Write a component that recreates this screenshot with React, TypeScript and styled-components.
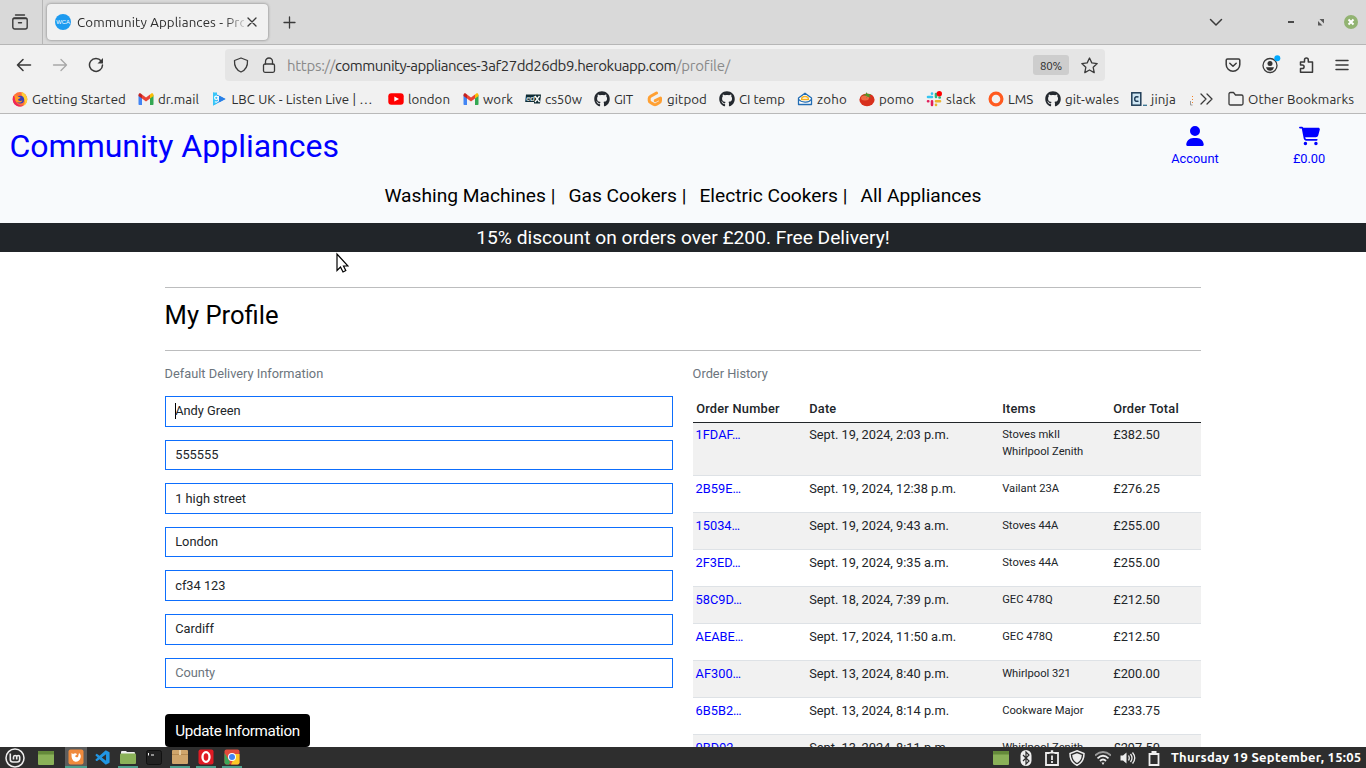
import React, { useLayoutEffect, useRef, useState } from "react";
import styled, { createGlobalStyle } from "styled-components";
import { FaUser, FaCartShopping, FaGithub } from "react-icons/fa6";
import { BiLogoVisualStudio } from "react-icons/bi";

const Global = createGlobalStyle`
  * { box-sizing: border-box; }
  body { margin: 0; overflow: hidden; }
  svg { display: block; flex: none; }
`;

/* Text that spreads its letters to fill a given width. */
const FitSpan = styled.span`
  display: inline-block;
  white-space: pre;
  flex: none;
`;
function Fit({ w, children }: { w: number; children: string }) {
  const ref = useRef<HTMLSpanElement>(null);
  const [spacing, setSpacing] = useState<number | null>(null);
  useLayoutEffect(() => {
    const natural = ref.current!.getBoundingClientRect().width;
    setSpacing((w - natural) / children.length);
  }, [w, children]);
  return (
    <FitSpan ref={ref} style={spacing === null ? undefined : { letterSpacing: spacing, width: w }}>
      {children}
    </FitSpan>
  );
}

const Screen = styled.div`
  width: 1366px;
  height: 768px;
  display: flex;
  flex-direction: column;
  overflow: hidden;
  background: #fff;
`;

/* ---------- browser chrome ---------- */
const Chrome = styled.div`
  flex: none;
  font-family: Ubuntu, "Noto Sans", sans-serif;
  font-size: 13.3px;
  color: #2e2e2e;
  background: #f1f1f1;
`;
const TabStrip = styled.div`
  height: 45px;
  display: flex;
  align-items: center;
  background: #d9d9d9;
  border-bottom: 1px solid #b6b6b6;
`;
const ViewCell = styled.div`
  width: 43px;
  height: 44px;
  padding-left: 12px;
  display: flex;
  align-items: center;
  border-right: 1px solid #b6b6b6;
`;
const Tab = styled.div`
  width: 221px;
  height: 36px;
  margin-left: 4px;
  padding: 0 11px 0 8px;
  display: flex;
  align-items: center;
  background: #f1f1f1;
  border-radius: 4px;
  box-shadow: 0 0 3px rgba(0, 0, 0, 0.45);
`;
const TabTitle = styled.div`
  width: 168px;
  margin: 0 3px 0 6px;
  overflow: hidden;
  white-space: nowrap;
  mask-image: linear-gradient(to right, #000 148px, transparent 172px);
`;
const NewTab = styled.div`
  margin-left: 15px;
`;
const WindowControls = styled.div`
  margin-left: auto;
  display: flex;
  align-items: center;
  padding-right: 8px;
`;
const Toolbar = styled.div`
  height: 40px;
  display: flex;
  align-items: center;
  padding: 0 16px 0 16px;
`;
const NavButtons = styled.div`
  width: 209px;
  display: flex;
  gap: 20px;
`;
const UrlBar = styled.div`
  width: 880px;
  height: 32px;
  padding: 0 7px 0 8px;
  display: flex;
  align-items: center;
  background: #e5e5e5;
  border-radius: 4px;
`;
const Url = styled.div`
  margin-left: 10px;
  font-size: 15px;
  color: #8a8a8a;
  white-space: nowrap;
  b { font-weight: 400; color: #2e2e2e; }
`;
const ZoomBadge = styled.div`
  width: 36px;
  height: 20px;
  margin: 0 12px 0 auto;
  display: flex;
  justify-content: center;
  align-items: center;
  font-size: 11.5px;
  background: #cdcdcd;
  border-radius: 3px;
`;
const ToolIcons = styled.div`
  margin-left: auto;
  display: flex;
  gap: 20px;
`;
const Bookmarks = styled.div`
  height: 29px;
  display: flex;
  align-items: center;
  padding-left: 12px;
  border-bottom: 1px solid #b9b9b9;
`;
const Bookmark = styled.div<{ $w: number }>`
  width: ${(p) => p.$w}px;
  flex: none;
  display: flex;
  align-items: center;
  gap: 4px;
`;

/* ---------- site ---------- */
const Site = styled.main`
  flex: 1;
  min-height: 0;
  overflow: hidden;
  font-family: Roboto, sans-serif;
  font-size: 12.8px;
  color: #212529;
`;
const SiteHeader = styled.header`
  height: 109px;
  background: #f8fafc;
`;
const HeaderTop = styled.div`
  height: 64px;
  display: flex;
  padding-left: 9.5px;
  color: #00f;
`;
const Brand = styled.div`
  font-size: 32px;
  line-height: 65px;
`;
const HeaderLink = styled.div<{ $w: number }>`
  width: ${(p) => p.$w}px;
  padding-top: 12px;
  display: flex;
  flex-direction: column;
  align-items: center;
  line-height: 19px;
  gap: 3px;
  > svg { height: 20px; }
`;
const Spacer = styled.div`
  flex: 1;
`;
const SiteNav = styled.nav`
  padding: 4px 0 0 384.4px;
  display: flex;
  gap: 13px;
  font-size: 19.2px;
  line-height: 28px;
  color: #000;
`;
const Banner = styled.div`
  height: 29px;
  text-align: center;
  font-size: 19.2px;
  line-height: 29px;
  color: #fff;
  background: #212529;
`;
const Container = styled.div`
  width: 1036px;
  margin: 35px auto 0;
  border-top: 1px solid #bcbdbe;
`;
const Heading = styled.h2`
  margin: 0;
  height: 63px;
  font-size: 25.6px;
  font-weight: 400;
  line-height: 55px;
  color: #000;
  border-bottom: 1px solid #bcbdbe;
  text-indent: -0.4px;
`;
const Columns = styled.div`
  display: grid;
  grid-template-columns: 508px 508px;
  gap: 20px;
`;
const Caption = styled.p`
  margin: 13px 0 0;
  height: 32px;
  line-height: 20px;
  color: #6c757d;
  text-indent: -0.4px;
`;
const Form = styled.div`
  display: flex;
  flex-direction: column;
  gap: 13px;
`;
const Field = styled.div<{ $empty?: boolean }>`
  height: 30.6px;
  padding: 0 9.2px 0.8px;
  display: flex;
  align-items: center;
  border: 1px solid #0d6efd;
  color: ${(p) => (p.$empty ? "#6c757d" : "#212529")};
`;
const Caret = styled.i`
  width: 1px;
  height: 16px;
  margin-right: -1px;
  background: #000;
`;
const Button = styled.div`
  width: 145px;
  height: 33px;
  margin-top: 26.2px;
  border-radius: 4px;
  text-align: center;
  font-size: 15.2px;
  line-height: 34px;
  color: #fff;
  background: #000;
`;
const Row = styled.div<{ $h: number; $striped?: boolean }>`
  height: ${(p) => p.$h}px;
  display: grid;
  grid-template-columns: 113px 193px 111px 91px;
  padding-top: 3px;
  line-height: 19px;
  background: ${(p) => (p.$striped ? "#f1f1f1" : "#fff")};
  border-bottom: 1px solid #dee2e6;
  > * { padding-left: 3.2px; white-space: nowrap; }
`;
const HeadRow = styled(Row)`
  font-weight: 500;
  letter-spacing: 0.22px;
  border-bottom-color: #212529;
`;
const FirstRow = styled(Row)`
  padding-top: 2px;
`;
const OrderLink = styled.div`
  color: #00f;
  text-indent: -0.6px;
`;
const Items = styled.div`
  padding-top: 1px;
  font-size: 11.2px;
  line-height: 17px;
`;

/* ---------- desktop panel ---------- */
const Panel = styled.footer`
  height: 21px;
  flex: none;
  display: flex;
  align-items: stretch;
  padding-right: 4.5px;
  background: #2e2e2e;
  color: #fff;
`;
const Launcher = styled.div<{ $w: number; $open?: boolean; $active?: boolean }>`
  width: ${(p) => p.$w}px;
  margin: 0 3px;
  display: flex;
  justify-content: center;
  align-items: center;
  background: ${(p) => (p.$active ? "#5c5c5c" : "transparent")};
  border-bottom: ${(p) => (p.$open ? "2px solid #4c9f8c" : "0")};
`;
const Tray = styled.div`
  margin-left: auto;
  display: flex;
  align-items: center;
  gap: 9.5px;
`;
const Clock = styled.div`
  font: 700 13px/21px Ubuntu, "Noto Sans", sans-serif;
`;
const Pointer = styled.svg`
  position: absolute;
  left: 335px;
  top: 252px;
`;

const line = { fill: "none", stroke: "#3a3a3a", strokeWidth: 1.3, strokeLinecap: "round", strokeLinejoin: "round" } as const;
const Svg = ({ s = 16, h, children }: { s?: number; h?: number; children: React.ReactNode }) => (
  <svg width={s} height={h ?? s} viewBox={`0 0 ${s} ${h ?? s}`}>{children}</svg>
);

const Gmail = () => (
  <Svg>
    <path d="M.5 4v9.200q0 .8.8.8H4V7z" fill="#4285f4" />
    <path d="M15.500 4v9.200q0 .8-.8.8H12V7z" fill="#34a853" />
    <path d="M12 3.500v4L15.500 5V4c0-2-1.800-2-2.500-1.300z" fill="#fbbc04" />
    <path d="M.5 5V4c0-2 1.800-2 2.500-1.300l1 .8v4z" fill="#c5221f" />
    <path d="M4 3.500l4 3 4-3v4l-4 3-4-3z" fill="#ea4335" />
  </Svg>
);
const Firefox = () => (
  <Svg>
    <circle cx="8" cy="8.300" r="7.300" fill="#ff7139" />
    <path d="M10 1c2 1 5.300 3.500 5.300 7.500 0 3-2 5.500-4 6.300 2-3 2-5 0-8C10 5 9 3 10 1z" fill="#ffcf35" />
    <path d="M1.500 4.500C0 8 .5 13 5 15c3 1 5 .5 6.500-.5-5 .5-9-3-8-8z" fill="#f0285a" />
    <circle cx="8.200" cy="8.600" r="3.900" fill="#3a3fb5" />
    <path d="M2.500 4.500c1.500 0 3 .3 4 1.300l2 .7c0 1.200-2 1-2.500 2.200.8 1.500 3 1.500 4.500.5-.5 3-6.500 3.500-7.500-.5z" fill="#ff9a25" />
  </Svg>
);
const Player = () => (
  <Svg>
    <path d="M1 1.500L13.500 8 1 14.500z" fill="#148cf0" />
    <path d="M1 1.500h4v11L1 14.500z" fill="#38c6f8" />
    <path d="M7.500 4.800L13.500 8l-6 3.200z" fill="#2b7fe6" />
    <circle cx="4.300" cy="6.800" r="1.700" fill="none" stroke="#fff" strokeWidth="1.200" />
    <path d="M6.300 5v5q-1.200 1.700-3.500.8" fill="none" stroke="#fff" strokeWidth="1.200" />
  </Svg>
);
const Youtube = () => (
  <Svg>
    <rect x=".3" y="2.300" width="15.400" height="11.400" rx="3" fill="#f00" />
    <path d="M6.300 5.500v5L11 8z" fill="#fff" />
  </Svg>
);
const EdxText = styled.text`
  font: italic 700 8px "Liberation Sans", sans-serif;
  fill: #c9d3d6;
`;
const Edx = () => (
  <Svg>
    <path d="M1 3.500h15l-1 9H9v-1.500H.2z" fill="#0e2b33" />
    <EdxText x="1" y="10" textLength="9">ed</EdxText>
    <path d="M10 5l4.500 6M14.500 5L10 11" stroke="#fff" strokeWidth="1.300" />
  </Svg>
);
const Gitpod = () => (
  <Svg>
    <path d="M9.500 2L3.700 5.200q-1.500.8-1.500 2.300v2q0 1.300 1.300 2l3.300 1.900q1.200.6 2.400 0l3.300-1.900q1-.6 1-2V7L8.300 9.700" fill="none" stroke="#ffa033" strokeWidth="3" strokeLinecap="round" strokeLinejoin="round" />
  </Svg>
);
const Zoho = () => (
  <Svg>
    <path d="M1.500 7L8 2.200 14.500 7v6.500h-13z" fill="#fff" stroke="#226db4" strokeWidth="1.300" strokeLinejoin="round" />
    <path d="M2 8.500c2 3 10 4 12 0" fill="none" stroke="#226db4" strokeWidth="1.200" />
    <path d="M4.500 8.500c0-4 7-4 7 0z" fill="#fff" stroke="#f9b21d" strokeWidth="1.300" />
  </Svg>
);
const Tomato = () => (
  <Svg>
    <ellipse cx="8" cy="8.800" rx="7.600" ry="6.400" fill="#d8301c" />
    <ellipse cx="6" cy="7" rx="4" ry="2.500" fill="#f06a44" />
    <path d="M8 5L3.500 4 7 3.300 7 1l1.500 2L12.500 3 10 4.500l2 2.500L8.500 5.500 7 7.500z" fill="#4d9a2b" />
  </Svg>
);
const Slack = () => (
  <Svg>
    <g strokeWidth="2.600" strokeLinecap="round">
      <path d="M6 2.500v.2M2 6h4" stroke="#36c5f0" />
      <path d="M10 3v3M13.500 6.500h.3" stroke="#2eb67d" />
      <path d="M10 10.300h4M10 13.700v.2" stroke="#ecb22e" />
      <path d="M2 10.300h.3M6 10.300v3.600" stroke="#e01e5a" />
    </g>
    <circle cx="13.300" cy="2.700" r="2.700" fill="#f00" />
  </Svg>
);
const Ring = () => (
  <Svg><circle cx="8" cy="8" r="5.900" fill="none" stroke="#ff5a1f" strokeWidth="3.200" /></Svg>
);
const Jinja = () => (
  <Svg>
    <rect x=".8" y="1.800" width="9" height="12.400" fill="#cfe6f3" stroke="#1f3c57" strokeWidth="1.500" />
    <path d="M7.500 6Q3.700 5 3.700 8t3.800 2.200" fill="none" stroke="#1f3c57" strokeWidth="1.500" />
    <path d="M12 14.300h4" stroke="#33708f" strokeWidth="1.300" />
  </Svg>
);
const GitHub = () => <FaGithub size={16} color="#24292f" />;

const Window = () => (
  <Svg h={14}>
    <rect width="16" height="14" rx="1" fill="#8ab158" />
    <path d="M0 1q0-1 1-1h14q1 0 1 1v2.500H0z" fill="#648a3a" />
  </Svg>
);

const bookmarks: [React.FC, string, number, number][] = [
  [Firefox, "Getting Started", 94, 126],
  [Gmail, "dr.mail", 41, 73.5],
  [Player, "LBC UK - Listen Live | …", 141, 176.5],
  [Youtube, "london", 42, 75],
  [Gmail, "work", 30, 62],
  [Edx, "cs50w", 37, 69],
  [GitHub, "GIT", 19, 53],
  [Gitpod, "gitpod", 40, 72],
  [GitHub, "CI temp", 46, 78],
  [Zoho, "zoho", 30, 62],
  [Tomato, "pomo", 35, 67],
  [Slack, "slack", 30, 62],
  [Ring, "LMS", 25, 57],
  [GitHub, "git-wales", 54, 86],
  [Jinja, "jinja", 25, 58],
];

const orders: [string, string, string[], string][] = [
  ["1FDAF…", "Sept. 19, 2024, 2:03 p.m.", ["Stoves mkII", "Whirlpool Zenith"], "£382.50"],
  ["2B59E…", "Sept. 19, 2024, 12:38 p.m.", ["Vailant 23A"], "£276.25"],
  ["15034…", "Sept. 19, 2024, 9:43 a.m.", ["Stoves 44A"], "£255.00"],
  ["2F3ED…", "Sept. 19, 2024, 9:35 a.m.", ["Stoves 44A"], "£255.00"],
  ["58C9D…", "Sept. 18, 2024, 7:39 p.m.", ["GEC 478Q"], "£212.50"],
  ["AEABE…", "Sept. 17, 2024, 11:50 a.m.", ["GEC 478Q"], "£212.50"],
  ["AF300…", "Sept. 13, 2024, 8:40 p.m.", ["Whirlpool 321"], "£200.00"],
  ["6B5B2…", "Sept. 13, 2024, 8:14 p.m.", ["Cookware Major"], "£233.75"],
  ["0BD92…", "Sept. 13, 2024, 8:11 p.m.", ["Whirlpool Zenith"], "£297.50"],
];

const LogoText = styled.text`
  font: 5.800px "Liberation Sans", sans-serif;
  fill: #fff;
`;

export default function App() {
  return (
    <Screen>
      <Global />
      <Chrome>
        <TabStrip>
          <ViewCell>
            <Svg>
              <g {...line} strokeWidth={1.400}>
                <path d="M3.500 1h9" />
                <rect x=".8" y="4" width="14.400" height="11" rx="2" />
                <path d="M1.500 4.500h13M6.500 8.800h3" />
              </g>
            </Svg>
          </ViewCell>
          <Tab>
            <Svg>
              <circle cx="8" cy="8" r="8" fill="#1d9bf0" />
              <LogoText x="1.300" y="10" textLength="13.500">WCA</LogoText>
            </Svg>
            <TabTitle><Fit w={190}>Community Appliances - Profile</Fit></TabTitle>
            <Svg s={10}><path {...line} d="M1 1l8 8M9 1l-8 8" /></Svg>
          </Tab>
          <NewTab><Svg s={13}><path {...line} d="M6.500 1v11M1 6.500h11" /></Svg></NewTab>
          <WindowControls>
            <Svg s={14}><path {...line} strokeWidth={1.500} d="M1.500 4.500L7 10l5.500-5.500" /></Svg>
            <svg width="121" height="16" viewBox="0 0 121 16">
              <path d="M65 8h6" stroke="#4a4a4a" strokeWidth="2" />
              <path d="M96.500 5h4.500v4.500zM95 7v4.500h4.500z" fill="#5a5a5a" />
            </svg>
            <Svg s={14}>
              <circle cx="7" cy="7" r="7" fill="#92b372" />
              <path d="M4.500 4.500l5 5M9.500 4.500l-5 5" stroke="#fff" strokeWidth="2" />
            </Svg>
          </WindowControls>
        </TabStrip>
        <Toolbar>
          <NavButtons>
            <Svg><path {...line} strokeWidth={1.600} d="M14.500 8h-13M7 2.500L1.500 8 7 13.500" /></Svg>
            <Svg><path {...line} stroke="#a8a8a8" d="M1.500 8h13M9 2.500L14.500 8 9 13.500" /></Svg>
            <Svg>
              <path {...line} strokeWidth={1.500} d="M13.200 4A6.500 6.500 0 1 0 14.500 8" />
              <path d="M15 1v5.500H9.500z" fill="#3a3a3a" />
            </Svg>
          </NavButtons>
          <UrlBar>
            <Svg><path {...line} d="M8 1L14.500 3.500q.5 8.500-6.500 11.500Q1 12 1.500 3.500z" /></Svg>
            <svg width="28" height="16" viewBox="0 0 28 16">
              <rect {...line} x="14.500" y="7" width="11" height="8.300" rx="1.500" />
              <path {...line} d="M16.500 7V4.500a3.500 3.500 0 0 1 7 0V7" />
            </svg>
            <Url><Fit w={48}>https://</Fit><b><Fit w={341}>community-appliances-3af27dd26db9.herokuapp.com</Fit></b><Fit w={53.5}>/profile/</Fit></Url>
            <ZoomBadge><Fit w={22}>80%</Fit></ZoomBadge>
            <Svg s={17}><path {...line} d="M8.500 1l2.300 4.900 5.400.7-4 3.700 1 5.300-4.700-2.600-4.700 2.600 1-5.300-4-3.700 5.400-.7z" /></Svg>
          </UrlBar>
          <ToolIcons>
            <svg width="14" height="16" viewBox="0 0 14 16" overflow="visible">
              <path {...line} strokeWidth={1.500} d="M1.500 2h11q1.300 0 1.300 1.300v4.200a6.800 6.800 0 0 1-13.600 0V3.300Q.2 2 1.500 2z" />
              <path {...line} strokeWidth={1.500} d="M3.800 6.300L7 9.300l3.200-3" />
            </svg>
            <svg width="18" height="16" viewBox="0 0 18 16" overflow="visible">
              <circle {...line} cx="10" cy="8.500" r="7" />
              <circle cx="10" cy="6.500" r="2.500" fill="#333" />
              <path d="M6 10.300h8q-1 3.500-4 3.500t-4-3.500z" fill="#333" />
              <circle cx="17.300" cy="1.200" r="3" fill="#00a9ff" />
            </svg>
            <svg width="16" height="16" viewBox="0 0 16 16">
              <path {...line} strokeWidth={1.500} d="M2.500 15.200V11.500h1.800a1.800 1.800 0 0 0 0-3.600H2.500V5h4V3a1.900 1.900 0 0 1 3.800 0v2h4.200v10.200z" />
            </svg>
            <Svg><path {...line} strokeWidth={1.500} d="M2 3.500h12M2 8h12M2 12.500h12" /></Svg>
          </ToolIcons>
        </Toolbar>
        <Bookmarks>
          {bookmarks.map(([Icon, label, textWidth, width]) => (
            <Bookmark key={label} $w={width}><Icon /><Fit w={textWidth}>{label}</Fit></Bookmark>
          ))}
          <svg width="39" height="16" viewBox="0 0 39 16">
            <path d="M1.500 10v4h2" stroke="#999" fill="none" />
            <path d="M3.500 5v1M3.500 8v1M3.500 11v1" stroke="#f48024" />
            <path {...line} d="M12 3l5 5-5 5M18 3l5 5-5 5" />
          </svg>
          <Bookmark $w={130}>
            <Svg><path {...line} d="M1 12.500V3q0-1.500 1.500-1.500h3L7.500 4h6Q15 4 15 5.500v7q0 1.500-1.500 1.500h-11Q1 14 1 12.500z" /></Svg>
            <Fit w={106}>Other Bookmarks</Fit>
          </Bookmark>
        </Bookmarks>
      </Chrome>

      <Site>
        <SiteHeader>
          <HeaderTop>
            <Brand><Fit w={329.5}>Community Appliances</Fit></Brand>
            <Spacer />
            <HeaderLink $w={114}><FaUser size={20} /><Fit w={47.5}>Account</Fit></HeaderLink>
            <HeaderLink $w={114}><FaCartShopping size={21} /><Fit w={32}>£0.00</Fit></HeaderLink>
          </HeaderTop>
          <SiteNav>
            <Fit w={171}>Washing Machines |</Fit>
            <Fit w={118}>Gas Cookers |</Fit>
            <Fit w={148}>Electric Cookers |</Fit>
            <Fit w={121}>All Appliances</Fit>
          </SiteNav>
        </SiteHeader>
        <Banner><Fit w={413.5}>15% discount on orders over £200. Free Delivery!</Fit></Banner>
        <Container>
          <Heading>My Profile</Heading>
          <Columns>
            <section>
              <Caption>Default Delivery Information</Caption>
              <Form>
                <Field><Caret />Andy Green</Field>
                <Field>555555</Field>
                <Field>1 high street</Field>
                <Field>London</Field>
                <Field>cf34 123</Field>
                <Field>Cardiff</Field>
                <Field $empty>County</Field>
              </Form>
              <Button><Fit w={124.5}>Update Information</Fit></Button>
            </section>
            <section>
              <Caption>Order History</Caption>
              <HeadRow $h={27}>
                <div>Order Number</div><div>Date</div><div>Items</div><div>Order Total</div>
              </HeadRow>
              {orders.map(([id, date, items, total], i) => {
                const Line = i === 0 ? FirstRow : Row;
                return (
                  <Line key={id} $h={i === 0 ? 53 : 37} $striped={i % 2 === 0}>
                    <OrderLink>{id}</OrderLink>
                    <div>{date}</div>
                    <Items>{items.map((name) => <div key={name}>{name}</div>)}</Items>
                    <div>{total}</div>
                  </Line>
                );
              })}
            </section>
          </Columns>
        </Container>
      </Site>

      <Panel>
        <Launcher $w={24}>
          <Svg s={20}>
            <circle cx="10" cy="10" r="9" fill="none" stroke="#eee" strokeWidth="1.500" />
            <path d="M5.300 5.500v6q0 2.500 2.500 2.500h4.400q2.500 0 2.500-2.500V9q0-1.500-1.500-1.500T11.700 9v2.500M11.700 9q0-1.500-1.500-1.500T8.500 9v2.500" fill="none" stroke="#eee" strokeWidth="1.600" />
          </Svg>
        </Launcher>
        <Launcher $w={26}><Window /></Launcher>
        <Launcher $w={22} $open $active>
          <Svg>
            <rect x=".5" y=".5" width="15" height="15" rx="2" fill="#f08a3c" />
            <path d="M3.500 4l1.500 1q3-1.500 4 .5L7 7q1 2 3 1l1-4q2.500 2 1.500 5-1.500 4-5 3.800Q3 12 3.500 4z" fill="#fff" />
          </Svg>
        </Launcher>
        <Launcher $w={19}><BiLogoVisualStudio size={17} color="#2196e3" /></Launcher>
        <Launcher $w={20} $open>
          <Svg h={14}>
            <path d="M1 2q0-1 1-1h4l1 1h7q1 0 1 1v3H1z" fill="#eee" />
            <rect y="3.500" width="16" height="10.500" rx="1" fill="#8ab158" />
          </Svg>
        </Launcher>
        <Launcher $w={20}>
          <Svg h={15}>
            <rect x=".5" y=".5" width="15" height="14" rx="2" fill="#222" stroke="#111" />
            <path d="M2.500 3v2.500M5 5h3" stroke="#fff" />
          </Svg>
        </Launcher>
        <Launcher $w={20} $open>
          <Svg h={15}>
            <rect y="1" width="16" height="14" rx="1" fill="#cfa56b" />
            <path d="M0 5.500h16" stroke="#b48a52" />
            <path d="M7 1h2v5H7z" fill="#e8cfa5" />
          </Svg>
        </Launcher>
        <Launcher $w={20} $open>
          <Svg>
            <rect x=".5" y=".5" width="15" height="15" rx="2" fill="#e01b24" />
            <ellipse cx="8" cy="8" rx="3.500" ry="4.800" fill="none" stroke="#fff" strokeWidth="2.300" />
          </Svg>
        </Launcher>
        <Launcher $w={20} $open>
          <Svg>
            <rect x=".5" y=".5" width="15" height="15" rx="2" fill="#e24b3b" />
            <path d="M.5 4L6 13l-1 2.500H2.500Q.5 15.500.5 13.500z" fill="#3ba757" />
            <path d="M8 5h7.500v8.500q0 2-2 2H7L10 9z" fill="#fbc926" />
            <circle cx="8" cy="8" r="4" fill="#fff" />
            <circle cx="8" cy="8" r="3" fill="#4285f4" />
          </Svg>
        </Launcher>
        <Tray>
          <Window />
          <Svg>
            <rect x="2.500" y="0" width="11" height="16" rx="5.500" fill="#eee" />
            <path d="M5 5l6 6-3 3V2l3 3-6 6" fill="none" stroke="#2e2e2e" strokeWidth="1.200" />
          </Svg>
          <Svg>
            <path d="M5.500 3H2v12h12V3h-3.500" fill="none" stroke="#eee" strokeWidth="1.800" />
            <path d="M5 3.500V2h1.800V.3h2.400V2H11v1.500z" fill="#eee" />
            <path d="M8 5.500v4.500M8 11v2" stroke="#eee" strokeWidth="1.800" />
          </Svg>
          <Svg>
            <path d="M8 .8L15 3.500Q15 12 8 15.300 1 12 1 3.500z" fill="none" stroke="#eee" strokeWidth="1.500" />
            <path d="M8 3.300l4.800 1.700Q12.500 10.500 8 13 3.500 10.500 3.200 5z" fill="#eee" />
          </Svg>
          <Svg>
            <path d="M0 5.500q8-7 16 0" fill="none" stroke="#999" strokeWidth="1.800" />
            <path d="M2.500 8.300q5.500-5 11 0M5 11q3-3 6 0" fill="none" stroke="#eee" strokeWidth="1.800" />
            <path d="M6.500 12.500h3L8 15z" fill="#eee" />
          </Svg>
          <Svg>
            <path d="M.5 5.500H3L6.500 2.500v11L3 10.500H.5z" fill="#eee" />
            <path d="M8.500 5.500q1.500 2.500 0 5M10.500 4q3 4 0 8M12.500 2.500q4.500 5.500 0 11" fill="none" stroke="#eee" strokeWidth="1.300" />
          </Svg>
          <Svg>
            <path d="M3.500 4h9v11h-9z" fill="none" stroke="#eee" strokeWidth="1.800" />
            <path d="M5.500 4V1h5v3z" fill="#eee" />
          </Svg>
          <Clock><Fit w={190.5}>Thursday 19 September, 15:05</Fit></Clock>
        </Tray>
      </Panel>
      <Pointer width="14" height="22" viewBox="0 0 14 22">
        <path d="M2 2v16.500l3.500-3.500 2.500 5 2.800-1.500L8.500 14H13z" fill="#fff" stroke="#000" strokeWidth="1.200" />
      </Pointer>
    </Screen>
  );
}
